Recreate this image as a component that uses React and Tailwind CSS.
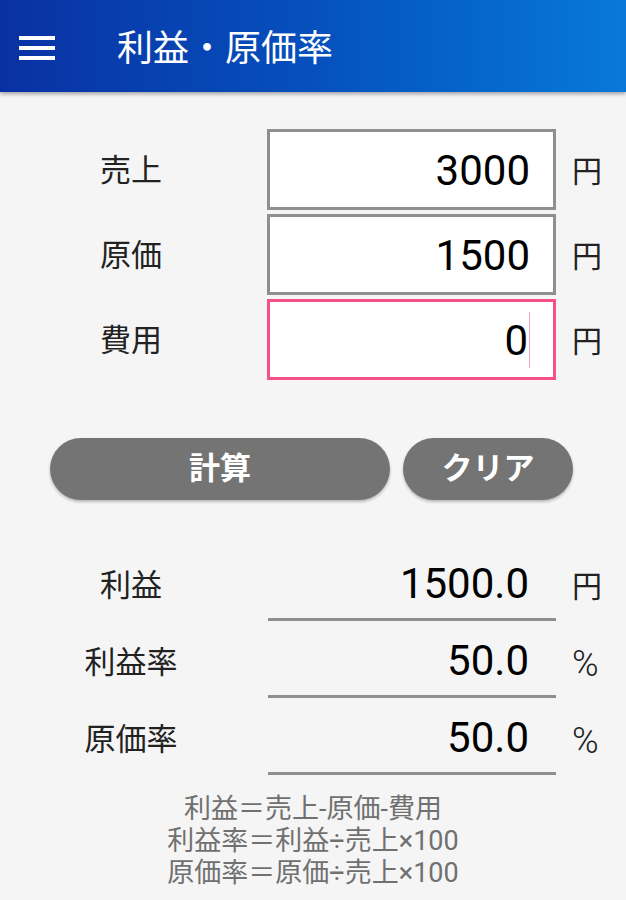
const FONT = { fontFamily: 'Roboto, "Noto Sans CJK JP", sans-serif' }

const INPUTS = [
  { label: '売上', value: '3000', focused: false },
  { label: '原価', value: '1500', focused: false },
  { label: '費用', value: '0', focused: true },
]

const RESULTS = [
  { label: '利益', value: '1500.0', unit: '円' },
  { label: '利益率', value: '50.0', unit: '%' },
  { label: '原価率', value: '50.0', unit: '%' },
]

export default function App() {
  return (
    <div className="w-[626px] h-[900px] bg-[#f5f5f5] overflow-hidden font-['Roboto','Noto_Sans_CJK_JP',sans-serif]">
      <header className="relative z-10 h-[92px] flex items-center bg-gradient-to-r from-[#0a31a3] via-[#0650bd] to-[#0979d9] shadow-[0_2px_4px_rgba(0,0,0,0.35)]">
        <div className="ml-[19px] w-[36px] flex flex-col gap-[6px] pt-[4px]">
          <span className="block h-[4px] bg-white" />
          <span className="block h-[4px] bg-white" />
          <span className="block h-[4px] bg-white" />
        </div>
        <h1 className="ml-[62px] pt-[6px] text-white text-[36px] leading-none">利益・原価率</h1>
      </header>

      <div className="pt-[37px] flex flex-col gap-[4px]">
        {INPUTS.map(r => (
          <div key={r.label} className="flex items-center h-[81px]">
            <div className="w-[262px] pt-[4px] text-center text-[31px] text-[#222]">{r.label}</div>
            <div className={`ml-[5px] w-[289px] h-[81px] bg-white border-[3px] flex items-center justify-end pr-[23px] ${r.focused ? 'border-[#f5508b]' : 'border-[#8f8f8f]'}`}>
              <span className="text-[42px] text-black leading-none pt-[2px]" style={FONT}>{r.value}</span>
              {r.focused && <span className="ml-[1px] w-[1px] h-[56px] bg-[#f7a3bf]" />}
            </div>
            <div className="ml-[16px] pt-[4px] text-[30px] text-[#222]">円</div>
          </div>
        ))}
      </div>

      <div className="mt-[58px] flex gap-[13px] pl-[50px]">
        <button className="w-[340px] h-[62px] rounded-full bg-[#747474] text-white text-[31px] font-bold shadow-[0_2px_3px_rgba(0,0,0,0.25)]">計算</button>
        <button className="w-[170px] h-[62px] rounded-full bg-[#747474] text-white text-[31px] font-bold shadow-[0_2px_3px_rgba(0,0,0,0.25)]">クリア</button>
      </div>

      <div className="mt-[44px] flex flex-col">
        {RESULTS.map(r => (
          <div key={r.label} className="flex items-center h-[77px]">
            <div className="w-[262px] text-center text-[31px] text-[#222] pt-[8px]">{r.label}</div>
            <div className="ml-[6px] w-[288px] h-[77px] border-b-[3px] border-[#8f8f8f] flex items-center justify-end pr-[27px]">
              <span className="text-[42px] text-black leading-none pt-[6px]" style={FONT}>{r.value}</span>
            </div>
            {r.unit === '%' ? (
              <div className="ml-[16px] pt-[8px] text-[36px] font-light text-[#222]" style={FONT}>%</div>
            ) : (
              <div className="ml-[16px] pt-[8px] text-[30px] text-[#222]">{r.unit}</div>
            )}
          </div>
        ))}
      </div>

      <div className="mt-[18px] text-center text-[27px] leading-[32px] text-[#707070]">
        <div>利益＝売上-原価-費用</div>
        <div>利益率＝利益÷売上×100</div>
        <div>原価率＝原価÷売上×100</div>
      </div>
    </div>
  )
}
